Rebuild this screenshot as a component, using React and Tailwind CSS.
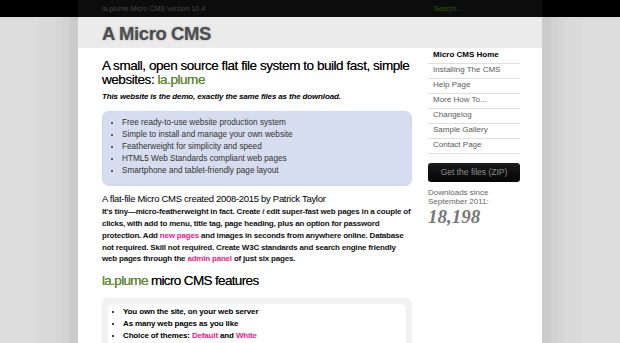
const features = [
  'Free ready-to-use website production system',
  'Simple to install and manage your own website',
  'Featherweight for simplicity and speed',
  'HTML5 Web Standards compliant web pages',
  'Smartphone and tablet-friendly page layout',
]

const nav = [
  'Micro CMS Home',
  'Installing The CMS',
  'Help Page',
  'More How To...',
  'Changelog',
  'Sample Gallery',
  'Contact Page',
]

export default function App() {
  return (
    <div className="min-h-screen overflow-hidden bg-[#dcdcdc] font-['Liberation_Sans',Arial,sans-serif] text-[#222]">
      {/* top strip */}
      <div className="relative z-10 h-[17px] bg-black">
        <div className="mx-auto flex h-full w-[464px] items-center bg-[#0c0c0c] pl-6 pr-[22px]">
          <span className="text-[7px] leading-none text-[#474747]">la.plume Micro CMS version 10.4</span>
          <span className="ml-auto w-[92px] pl-[6px] text-[7px] leading-none text-[#35560f]">Search...</span>
        </div>
      </div>

      <div className="mx-auto w-[464px] bg-white shadow-[0_0_0_9px_#cbcbcb,0_0_0_16px_#d2d2d2,0_0_0_22px_#d6d6d6,0_0_0_39px_#dadada]">
        <div className="h-[31px] bg-[#ebebeb] pl-6 pt-[3px]">
          <h1 className="text-[18.5px] font-bold leading-[28px] tracking-[-0.4px] text-[#4d4d4d] [text-shadow:0_0_2px_rgba(0,0,0,0.35)]">
            A Micro CMS
          </h1>
        </div>

        <div className="flex gap-4 pl-6 pr-[22px] pb-10">
          <main className="w-[310px]">
            <h2 className="mt-[11px] text-[13.5px] leading-[14px] tracking-[-0.45px] text-black [text-shadow:0_0_0.4px_rgba(0,0,0,0.6)]">
              A small, open source flat file system to build fast, simple websites:{' '}
              <span className="text-[#5c8f1e]">la.plume</span>
            </h2>
            <p className="mt-[5px] text-[8px] font-bold italic leading-[10px] tracking-[-0.15px] text-black">
              This website is the demo, exactly the same files as the download.
            </p>

            <ul className="mt-[9px] list-disc rounded-[7px] border border-[#cfd7ea] bg-[#d6ddee] pt-[5px] pb-[8px] pl-[19px] text-[8.2px] leading-[12.1px] text-[#333]">
              {features.map((f) => (
                <li key={f} className="marker:text-[7px]">{f}</li>
              ))}
            </ul>

            <h3 className="mt-[7px] text-[9.5px] leading-[11px] tracking-[-0.3px] text-black">
              A flat-file Micro CMS created 2008-2015 by Patrick Taylor
            </h3>
            <p className="mt-[2px] text-[8px] font-bold leading-[11.7px] tracking-[-0.2px] text-[#111]">
              It's tiny—micro-featherweight in fact. Create / edit super-fast web pages in a couple of clicks, with add to
              menu, title tag, page heading, plus an option for password protection. Add{' '}
              <span className="text-[#f2168a]">new pages</span> and images in seconds from anywhere online. Database not
              required. Skill not required. Create W3C standards and search engine friendly web pages through the{' '}
              <span className="text-[#f2168a]">admin panel</span> of just six pages.
            </p>

            <h3 className="mt-[8px] text-[13.5px] leading-[16px] tracking-[-0.65px] text-black [text-shadow:0_0_0.4px_rgba(0,0,0,0.6)]">
              <span className="text-[#5c8f1e]">la.plume</span> micro CMS features
            </h3>

            <div className="mt-[9px] rounded-[7px] bg-[#f1f1f1] p-[6px] shadow-[0_0_1px_#ddd]">
              <ul className="list-disc rounded-[6px] bg-white pt-[2px] pb-2 pl-[15px] text-[8px] font-bold leading-[12px] tracking-[-0.15px] text-black">
                <li className="marker:text-[7px]">You own the site, on your web server</li>
                <li className="marker:text-[7px]">As many web pages as you like</li>
                <li className="marker:text-[7px]">
                  Choice of themes: <span className="text-[#f2168a]">Default</span> and{' '}
                  <span className="text-[#f2168a]">White</span>
                </li>
                <li className="marker:text-[7px]">Add images and media with ease</li>
              </ul>
            </div>
          </main>

          <aside className="w-[92px] pt-px">
            <ul>
              {nav.map((n, i) => (
                <li
                  key={n}
                  className={`border-b border-[#e0e0e0] pl-[5px] pt-px pb-[3px] text-[8px] leading-[10px] ${
                    i === 0 ? 'font-bold text-black' : 'text-[#5a5a5a]'
                  }`}
                >
                  {n}
                </li>
              ))}
            </ul>
            <button className="mt-[9px] flex h-[19px] w-full items-center justify-center rounded-[3px] bg-gradient-to-b from-[#1c1c1c] to-[#050505] text-[8.5px] text-[#8c8c8c]">
              Get the files (ZIP)
            </button>
            <p className="mt-[6px] text-[8px] leading-[9.4px] text-[#666]">
              Downloads since
              <br />
              September 2011:
            </p>
            <p className="font-['Liberation_Serif',Georgia,serif] text-[19px] font-bold italic leading-[20px] text-[#777]">
              18,198
            </p>
          </aside>
        </div>
      </div>
    </div>
  )
}
